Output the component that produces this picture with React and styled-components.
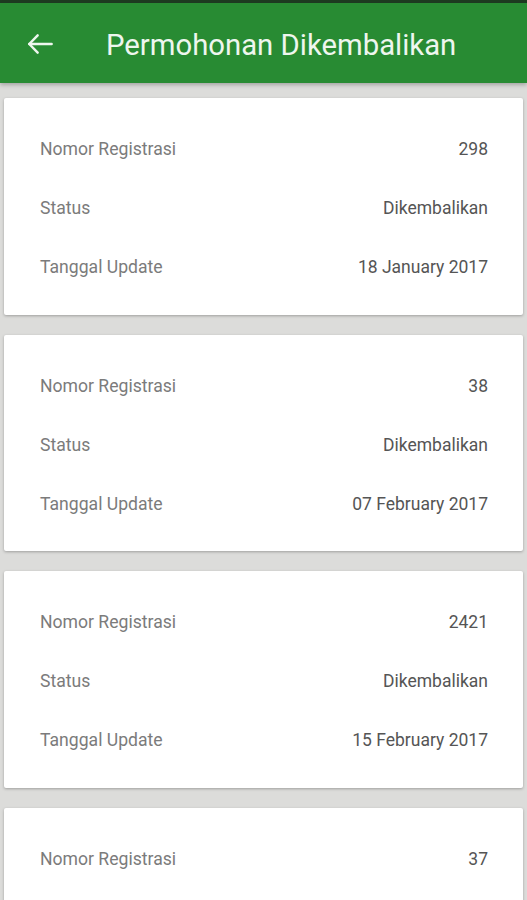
import styled, { createGlobalStyle } from 'styled-components';

const GlobalStyle = createGlobalStyle`
    html, body {
        margin: 0;
        padding: 0;
        background: #dcdcda;
        font-family: Roboto, "Noto Sans", sans-serif;
    }
`;

const requests = [
    { id: 298, status: 'Dikembalikan', date: '18 January 2017' },
    { id: 38, status: 'Dikembalikan', date: '07 February 2017' },
    { id: 2421, status: 'Dikembalikan', date: '15 February 2017' },
    { id: 37, status: 'Dikembalikan', date: '20 February 2017' },
];

function BackArrow() {
    return (
        <svg width="28" height="28" viewBox="0 0 24 24" fill="none" stroke="#eef6ee" strokeWidth="2.1" strokeLinecap="round" strokeLinejoin="round">
            <path d="M22 12H2.8" />
            <path d="M10 4.6L2.8 12l7.2 7.4" />
        </svg>
    );
}

function App() {
    return (
        <Screen>
            <GlobalStyle />
            <StatusStrip />
            <AppBar>
                <IconButton aria-label="back">
                    <BackArrow />
                </IconButton>
                <Title>Permohonan Dikembalikan</Title>
            </AppBar>

            <List>
                {requests.map((item) => (
                    <Card key={item.id}>
                        <Row>
                            <Label>Nomor Registrasi</Label>
                            <Value>{item.id}</Value>
                        </Row>
                        <Row>
                            <Label>Status</Label>
                            <Value>{item.status}</Value>
                        </Row>
                        <Row>
                            <Label>Tanggal Update</Label>
                            <Value>{item.date}</Value>
                        </Row>
                    </Card>
                ))}
            </List>
        </Screen>
    );
}

const Screen = styled.div`
    width: 527px;
    height: 900px;
    overflow: hidden;
    background: #dcdcda;
`;

const StatusStrip = styled.div`
    height: 3px;
    background: #1e3b21;
`;

const AppBar = styled.header`
    height: 80px;
    background: #288b33;
    display: flex;
    align-items: center;
    box-shadow: 0 2px 4px rgba(0, 0, 0, 0.25);
    position: relative;
    z-index: 1;
`;

const IconButton = styled.button`
    width: 82px;
    height: 80px;
    padding: 2px 0 0 26px;
    margin: 0;
    border: none;
    background: none;
    display: flex;
    align-items: center;
`;

const Title = styled.h1`
    margin: 3px 0 0 24px;
    font-size: 29.3px;
    font-weight: 400;
    color: #eef6ee;
`;

const List = styled.div`
    display: flex;
    flex-direction: column;
    gap: 20px;
    padding: 15px 4px 0 4px;
`;

const Card = styled.section`
    background: #ffffff;
    border-radius: 2px;
    box-shadow: 0 1px 3px rgba(0, 0, 0, 0.28);
    padding: 41px 35px 37.5px 36px;
    display: flex;
    flex-direction: column;
    gap: 39px;
`;

const Row = styled.div`
    display: flex;
    justify-content: space-between;
    align-items: baseline;
    height: 20px;
    font-size: 17.5px;
    line-height: 20px;
`;

const Label = styled.span`
    font-size: 17.6px;
    color: #7b7b7b;
`;

const Value = styled.span`
    color: #555555;
`;

export default App;
